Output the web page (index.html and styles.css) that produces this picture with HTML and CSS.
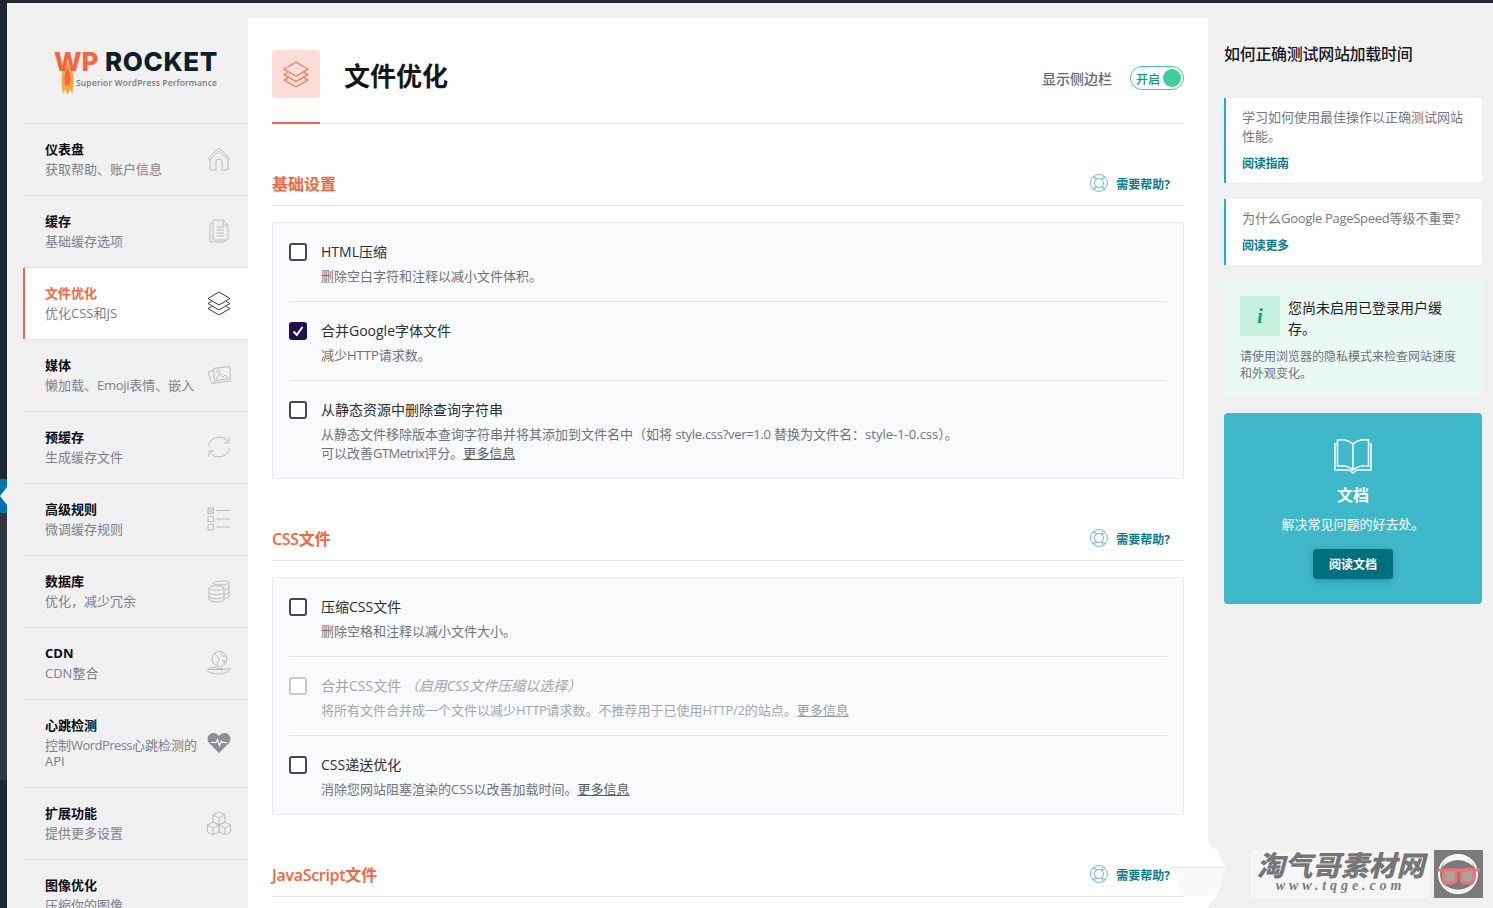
FILE: index.html
```html
<!DOCTYPE html>
<html lang="zh-CN">
<head>
<meta charset="utf-8">
<title>WP Rocket 文件优化</title>
<link rel="stylesheet" href="styles.css">
</head>
<body>
<div class="topbar"></div>
<div class="layout">
  <div class="rail">
    <div class="rail-a"></div>
    <div class="rail-arrow"><span class="notch"></span></div>
    <div class="rail-b"></div>
    <div class="rail-c"></div>
  </div>

  <nav class="sidebar">
    <div class="logo">
      <svg width="170" height="56" viewBox="0 0 170 56">
        <path d="M13 17 L18 25 L19.500 33 L18.500 49 L15.800 44 L13.500 50 L11.200 44 L8.500 49 L7.500 33 L9 25Z" fill="#f9a03f"/>
        <path d="M13.500 22 L16.500 31 L15.500 42 L13.500 38 L11.500 42 L10.500 31Z" fill="#f56640"/>
        <text x="0" y="25.500" class="logo-wp">WP</text>
        <text x="51" y="25.500" class="logo-rocket">ROCKET</text>
        <text x="22" y="40.500" class="logo-tag">Superior WordPress Performance</text>
      </svg>
    </div>
    <ul class="menu">
      <li class="item"><div class="item-text"><div class="item-title">仪表盘</div><div class="item-sub">获取帮助、账户信息</div></div>
        <svg class="nav-icon" viewBox="0 0 24 24"><path d="M12 1 L1 11.500 L2.500 13 L12 4 L21.500 13 L23 11.500Z M3 12.500V23H9V15a3 3 0 0 1 6 0V23H21V12.500"/></svg></li>
      <li class="item"><div class="item-text"><div class="item-title">缓存</div><div class="item-sub">基础缓存选项</div></div>
        <svg class="nav-icon" viewBox="0 0 24 24"><path d="M6 4H4a1 1 0 0 0-1 1V22a1 1 0 0 0 1 1H17a1 1 0 0 0 1-1V21M6 2a1 1 0 0 1 1-1H16L21 6V20a1 1 0 0 1-1 1H7a1 1 0 0 1-1-1ZM16 1V6H21M9.500 8H17M9.500 11H17M9.500 14H17M9.500 17H17"/></svg></li>
      <li class="item active"><div class="item-text"><div class="item-title">文件优化</div><div class="item-sub">优化CSS和JS</div></div>
        <svg class="nav-icon" viewBox="0 0 24 24"><path d="M12 1 L23 7.500 L12 14 L1 7.500Z M4.500 10.500 L1 12.500 L12 19 L23 12.500 L19.500 10.500 M4.500 15.500 L1 17.500 L12 24 L23 17.500 L19.500 15.500"/></svg></li>
      <li class="item"><div class="item-text"><div class="item-title">媒体</div><div class="item-sub">懒加载、<span class="tight">Emoji</span>表情、嵌入</div></div>
        <svg class="nav-icon" viewBox="0 0 24 24"><path d="M7 7 L1 9 L5 21 L9 19.600 M6.500 5.500 L23 3.500 L23 18 L7.500 20Z M9 16 L13 11 L16 14 L18 12 L21 15.500 M9 16 L9 17.500 L21 16M11.500 6.800a1.800 1.800 0 1 0 .1 0"/></svg></li>
      <li class="item"><div class="item-text"><div class="item-title">预缓存</div><div class="item-sub">生成缓存文件</div></div>
        <svg class="nav-icon" viewBox="0 0 24 24"><path d="M1.500 10.500A10.800 10.800 0 0 1 21 7M22.500 13.500A10.800 10.800 0 0 1 3 17M22 2.500V8H16.500M2 21.500V16H7.500"/></svg></li>
      <li class="item"><div class="item-text"><div class="item-title">高级规则</div><div class="item-sub">微调缓存规则</div></div>
        <svg class="nav-icon" viewBox="0 0 24 24"><path d="M1 1H6.500V6.500H1ZM1 1L6.500 6.500M6.500 1L1 6.500M1 9.300H6.500V14.800H1ZM1 17.500H6.500V23H1ZM9.500 3.500H23M9.500 12H23M9.500 20H23"/></svg></li>
      <li class="item"><div class="item-text"><div class="item-title">数据库</div><div class="item-sub">优化，减少冗余</div></div>
        <svg class="nav-icon" viewBox="0 0 24 24"><path d="M6 4.500C6 2.500 22 .5 22 3.500V17C22 18.500 19 19.500 17 19.800M6 4.500C6 6.500 22 6.500 22 3.500M22 8C22 10 19 11 17 11.300M22 12.500C22 14.500 19 15.500 17 15.800M2 9C2 6 17 6 17 9V20C17 24 2 24 2 20ZM2 9C2 12 17 12 17 9M2 13.500C2 16.500 17 16.500 17 13.500M2 17.500C2 20.500 17 20.500 17 17.500"/></svg></li>
      <li class="item"><div class="item-text"><div class="item-title">CDN</div><div class="item-sub">CDN整合</div></div>
        <svg class="nav-icon" viewBox="0 0 24 24"><circle cx="12.500" cy="8" r="7.500"/><path d="M8 2.500C9 6 12 5 12 8S9 11 11 15M15 1.500C13 4 16 6 17 5S19.500 6 19.500 7M15 10L18 9.500L16.500 13.500M1 18.500C4 15.500 8 16 11 17.500H15C17 18 16 20 14 19.500M15.500 18.500L23 17.500C24 18.500 22 20 20 21C14 24 8 23 3 21.500C1 21 0 19.500 1 18.500Z"/></svg></li>
      <li class="item two"><div class="item-text"><div class="item-title">心跳检测</div><div class="item-sub">控制<span class="tighter">WordPress</span>心跳检测的API</div></div>
        <svg class="nav-icon heart" viewBox="0 0 24 24"><path class="heart-fill" d="M12 22 L2.500 12.500C-1 9 .5 2.500 6 2C9 1.800 11 3.500 12 5C13 3.500 15 1.800 18 2C23.500 2.500 25 9 21.500 12.500Z"/><path class="heart-line" d="M4 11.500H9L10.500 8.500L12.500 14.500L14.500 10L15.500 11.500H20"/></svg></li>
      <li class="item"><div class="item-text"><div class="item-title">扩展功能</div><div class="item-sub">提供更多设置</div></div>
        <svg class="nav-icon" viewBox="0 0 24 24"><path d="M12 1 L18 4 V11 L12 14 L6 11 V4Z M6 4 L12 7 L18 4 M12 7V14M6 11 L12 14 V21 L6 24 L0.500 21 V14Z M0.500 14 L6 17 L12 14 M6 17V24M18 11 L23.500 14 V21 L18 24 L12 21 V14Z M12 14 L18 17 L23.500 14 M18 17V24"/></svg></li>
      <li class="item"><div class="item-text"><div class="item-title">图像优化</div><div class="item-sub">压缩你的图像</div></div></li>
    </ul>
  </nav>

  <main class="main">
    <header class="page-head">
      <div class="page-icon">
        <svg width="26" height="26" viewBox="0 0 24 24"><path d="M12 1 L23 7.500 L12 14 L1 7.500Z M4.500 10.500 L1 12.500 L12 19 L23 12.500 L19.500 10.500 M4.500 15.500 L1 17.500 L12 24 L23 17.500 L19.500 15.500"/></svg>
      </div>
      <h1 class="page-title">文件优化</h1>
      <div class="sidebar-toggle">
        <span class="toggle-label">显示侧边栏</span>
        <span class="toggle"><span class="toggle-text">开启</span><span class="knob"></span></span>
      </div>
    </header>

    <section class="section">
      <div class="section-head">
        <h2 class="section-title">基础设置</h2>
        <a class="help"><svg class="ring" viewBox="0 0 18 18"><circle cx="9" cy="9" r="8.500"/><circle cx="9" cy="9" r="4.500"/><path d="M3 3L5.800 5.800M15 3L12.200 5.800M3 15L5.800 12.200M15 15L12.200 12.200M4.600 2.200L6.600 5M13.400 2.200L11.400 5M4.600 15.800L6.600 13M13.400 15.800L11.400 13"/></svg>需要帮助?</a>
      </div>
      <div class="card">
        <div class="field">
          <span class="check"></span>
          <div class="field-body"><div class="field-label">HTML压缩</div><div class="field-desc">删除空白字符和注释以减小文件体积。</div></div>
        </div>
        <div class="field">
          <span class="check checked"><svg viewBox="0 0 18 18" width="18" height="18"><path d="M4.500 9.500L7.800 13L13.500 5"/></svg></span>
          <div class="field-body"><div class="field-label">合并Google字体文件</div><div class="field-desc">减少HTTP请求数。</div></div>
        </div>
        <div class="field">
          <span class="check"></span>
          <div class="field-body"><div class="field-label">从静态资源中删除查询字符串</div><div class="field-desc">从静态文件移除版本查询字符串并将其添加到文件名中（如将 <span class="tight">style.css?ver=1.0</span> 替换为文件名：style-1-0.css）。<br>可以改善<span class="tighter">GTMetrix</span>评分。<a class="more">更多信息</a></div></div>
        </div>
      </div>
    </section>

    <section class="section">
      <div class="section-head">
        <h2 class="section-title"><span class="tight">CSS</span>文件</h2>
        <a class="help"><svg class="ring" viewBox="0 0 18 18"><circle cx="9" cy="9" r="8.500"/><circle cx="9" cy="9" r="4.500"/><path d="M3 3L5.800 5.800M15 3L12.200 5.800M3 15L5.800 12.200M15 15L12.200 12.200M4.600 2.200L6.600 5M13.400 2.200L11.400 5M4.600 15.800L6.600 13M13.400 15.800L11.400 13"/></svg>需要帮助?</a>
      </div>
      <div class="card">
        <div class="field">
          <span class="check"></span>
          <div class="field-body"><div class="field-label">压缩CSS文件</div><div class="field-desc">删除空格和注释以减小文件大小。</div></div>
        </div>
        <div class="field disabled">
          <span class="check"></span>
          <div class="field-body"><div class="field-label">合并CSS文件 <em class="field-note">（启用CSS文件压缩以选择）</em></div><div class="field-desc">将所有文件合并成一个文件以减少<span class="tight">HTTP</span>请求数。不推荐用于已使用<span class="tight">HTTP/2</span>的站点。<a class="more">更多信息</a></div></div>
        </div>
        <div class="field">
          <span class="check"></span>
          <div class="field-body"><div class="field-label">CSS递送优化</div><div class="field-desc">消除您网站阻塞渲染的CSS以改善加载时间。<a class="more">更多信息</a></div></div>
        </div>
      </div>
    </section>

    <section class="section">
      <div class="section-head">
        <h2 class="section-title"><span class="tight">JavaScript</span>文件</h2>
        <a class="help"><svg class="ring" viewBox="0 0 18 18"><circle cx="9" cy="9" r="8.500"/><circle cx="9" cy="9" r="4.500"/><path d="M3 3L5.800 5.800M15 3L12.200 5.800M3 15L5.800 12.200M15 15L12.200 12.200M4.600 2.200L6.600 5M13.400 2.200L11.400 5M4.600 15.800L6.600 13M13.400 15.800L11.400 13"/></svg>需要帮助?</a>
      </div>
    </section>
  </main>

  <aside class="aside">
    <h3 class="aside-title">如何正确测试网站加载时间</h3>
    <div class="tip">
      <p class="tip-text">学习如何使用最佳操作以正确测试网站性能。</p>
      <a class="tip-link">阅读指南</a>
    </div>
    <div class="tip">
      <p class="tip-text">为什么<span class="tight">Google PageSpeed</span>等级不重要?</p>
      <a class="tip-link">阅读更多</a>
    </div>
    <div class="notice">
      <div class="notice-head">
        <span class="notice-icon">i</span>
        <p class="notice-title">您尚未启用已登录用户缓存。</p>
      </div>
      <p class="notice-text">请使用浏览器的隐私模式来检查网站速度和外观变化。</p>
    </div>
    <div class="docs">
      <svg class="book" width="38" height="36" viewBox="0 0 38 36"><path d="M19 6C15 2.500 8 1.500 3.500 2V28C9 27.500 15 28.500 19 32C23 28.500 29 27.500 34.500 28V2C30 1.500 23 2.500 19 6ZM19 6V32M3.500 6H1V32H15.500L19 35L22.500 32H37V6H34.500"/></svg>
      <div class="docs-title">文档</div>
      <div class="docs-sub">解决常见问题的好去处。</div>
      <a class="docs-btn">阅读文档</a>
    </div>
  </aside>
</div>

<svg class="smudge" width="60" height="70" viewBox="0 0 60 70">
  <path class="smudge-white" d="M30 0H38L40 8L48 12L50 20L56 29L52 42L47 58L38 68H30Z"/>
  <path class="smudge-soft" d="M2 30H56L52 42L44 58H14Z"/>
  <path class="smudge-line" d="M2 29.500H56"/>
</svg>
<div class="watermark">
  <div class="wm-text"><div class="wm-cn">淘气哥素材网</div><div class="wm-url">www.tqge.com</div></div>
  <div class="wm-badge">
    <svg width="49" height="48" viewBox="0 0 49 48">
      <circle class="wm-ring" cx="24" cy="24" r="19"/>
      <path class="wm-crescent" d="M8 17A17 17 0 0 1 40 17A22 22 0 0 0 8 17Z"/>
      <path class="wm-crescent" d="M9 33A17 17 0 0 0 39 33A20 20 0 0 1 9 33Z"/>
      <path class="wm-bar" d="M4 20H46"/>
      <rect class="wm-lens" x="9" y="20" width="13" height="13" rx="4"/>
      <rect class="wm-lens" x="27" y="20" width="13" height="13" rx="4"/>
    </svg>
  </div>
</div>
</body>
</html>
```
FILE: styles.css
```css
* { box-sizing: border-box; }
html, body { margin: 0; padding: 0; height: 908px; overflow: hidden; }
body {
  position: relative;
  background: #f0f0f0;
  color: #2a2f36;
  font-family: "Open Sans", "Noto Sans CJK SC", sans-serif;
  font-size: 13px;
}
h1, h2, h3, p, ul { margin: 0; padding: 0; }
ul { list-style: none; }
a { text-decoration: none; }
.tight { letter-spacing: -.3px; }
.tighter { letter-spacing: -.55px; }

.topbar { height: 3px; background: #23282d; }
.layout { display: flex; align-items: flex-start; height: 905px; }

/* WP admin rail */
.rail { width: 7px; height: 905px; flex: none; display: flex; flex-direction: column; }
.rail-a { height: 476px; background: #23282d; }
.rail-arrow { height: 34px; background: #0073aa; display: flex; align-items: center; justify-content: flex-end; }
.notch { width: 0; height: 0; border-style: solid; border-width: 9px 7px 9px 0; border-color: transparent #f0f0f0 transparent transparent; }
.rail-b { height: 267px; background: #32373c; }
.rail-c { flex: 1; background: #23282d; }

/* Left menu */
.sidebar { width: 241px; flex: none; padding-left: 16px; }
.logo { height: 120px; padding: 42px 0 0 31px; }
.logo svg { display: block; }
.logo-wp { font: 800 26px Inter, sans-serif; fill: #f56640; }
.logo-rocket { font: 800 26px Inter, sans-serif; letter-spacing: .6px; fill: #0f1e2b; }
.logo-tag { font: 600 8.500px "Open Sans", sans-serif; letter-spacing: .13px; fill: #777b80; }
.menu { border-top: 1px solid #e0e1e3; }
.item {
  display: flex;
  justify-content: space-between;
  align-items: center;
  padding: 17px 17px 18px 22px;
  border-bottom: 1px solid #e0e1e3;
  min-height: 72px;
}
.item.active { background: #fff; box-shadow: inset 2px 0 0 #f56640; }
.item-text { width: 160px; }
.item-title { font-size: 13px; line-height: 16px; font-weight: 700; color: #0a0c10; margin-bottom: 4px; }
.item-sub { font-size: 13px; line-height: 16px; color: #7c8088; }
.active .item-title { color: #f56640; }
.nav-icon { width: 24px; height: 24px; flex: none; fill: none; stroke: #b9bcc0; stroke-width: 1; }
.active .nav-icon { stroke: #2f3a46; }
.nav-icon.heart { stroke: none; }
.heart-fill { fill: #8e8f92; stroke: none; }
.heart-line { fill: none; stroke: #fff; stroke-width: 1.200; }

/* Main */
.main { width: 960px; flex: none; margin-top: 15px; height: 890px; background: #fff; padding: 32px 24px 0; }
.page-head { position: relative; display: flex; align-items: center; height: 74px; padding-bottom: 25px; margin-bottom: 48px; border-bottom: 1px solid #e3e4e6; }
.page-head::after { content: ""; position: absolute; left: 0; bottom: -1px; width: 48px; height: 2px; background: #f56640; }
.page-icon { width: 48px; height: 48px; border-radius: 3px; background: #ffded8; display: flex; align-items: center; justify-content: center; }
.page-icon svg { fill: none; stroke: #f7694a; stroke-width: 1; }
.page-title { margin-left: 24px; margin-top: 4px; font-size: 26px; line-height: 34px; font-weight: 700; color: #14161b; }
.sidebar-toggle { margin-left: auto; margin-top: 8px; display: flex; align-items: center; gap: 18px; }
.toggle-label { font-size: 14px; color: #666a70; font-weight: 500; }
.toggle { width: 54px; height: 24px; border: 1px solid #3fcf9b; border-radius: 12px; display: flex; align-items: center; justify-content: space-between; padding: 0 2px 0 5px; }
.toggle-text { padding-top: 1px; font-size: 12px; font-weight: 500; color: #0c9a6b; }
.knob { width: 18px; height: 18px; border-radius: 50%; background: #3fcf9b; }

.section { margin-bottom: 48px; }
.section-head { box-sizing: content-box; display: flex; justify-content: space-between; align-items: center; height: 24px; padding: 0 14px 9px 0; border-bottom: 1px solid #e3e4e6; }
.section-title { font-size: 16px; line-height: 24px; font-weight: 600; color: #f56640; }
.help { display: flex; align-items: center; gap: 8px; font-size: 12px; font-weight: 700; color: #0b7a8c; }
.ring { width: 18px; height: 18px; margin-top: -2px; fill: none; stroke: #73bcd2; stroke-width: 1; }
.card { margin-top: 16px; background: #f9fafb; border: 1px solid #e7e9ed; border-radius: 3px; padding: 0 16px; }
.field { display: flex; gap: 14px; padding: 19px 0 15px; border-bottom: 1px solid #e3e4e6; }
.field:last-child { border-bottom: 0; }
.check { flex: none; width: 18px; height: 18px; margin-top: 1px; border: 2px solid #44484e; border-radius: 3px; background: #fff; position: relative; }
.check.checked { background: #1e0f4f; border-color: #1e0f4f; }
.check svg { position: absolute; left: -2px; top: -2px; fill: none; stroke: #fff; stroke-width: 2; }
.field-label { font-size: 14px; line-height: 20px; color: #2a2f36; margin-bottom: 5px; }
.field-desc { font-size: 13px; line-height: 19px; color: #6e737a; }
.more { color: #555a60; text-decoration: underline; }
.disabled .check { border-color: #c6c8cb; }
.disabled .field-label, .disabled .field-desc { color: #a2a6ab; }
.disabled .more { color: #9a9ea3; }
.field-note { font-style: italic; font-size: 14px; line-height: 1; }

/* Right column */
.aside { width: 258px; flex: none; margin-left: 16px; padding-top: 39px; }
.aside-title { font-size: 16px; line-height: 24px; font-weight: 500; letter-spacing: -.3px; color: #16181d; margin-bottom: 32px; }
.tip { background: #fff; border-left: 2px solid #1fb1c6; border-radius: 0 3px 3px 0; padding: 10px 16px 10px; margin-bottom: 16px; box-shadow: 0 0 1px #d8dadd; }
.tip-text { font-size: 13px; line-height: 19px; color: #75797f; margin-bottom: 9px; }
.tip-link { display: block; font-size: 12px; line-height: 18px; font-weight: 700; color: #0b7a8c; letter-spacing: -.3px; }
.notice { background: #e9f8f3; border-radius: 3px; padding: 15px 16px 15px; margin-bottom: 16px; }
.notice-head { display: flex; gap: 8px; }
.notice-icon { flex: none; width: 40px; height: 40px; border-radius: 3px; background: #c5f0dd; color: #0e9e74; display: flex; align-items: center; justify-content: center; font: italic 700 20px "Liberation Serif", serif; }
.notice-title { padding-top: 1px; font-size: 14px; line-height: 21px; color: #1b1e24; }
.notice-text { margin-top: 9px; font-size: 12px; line-height: 17px; color: #6e737a; }
.docs { background: #3fb8ca; border-radius: 4px; padding: 25px 0 0; height: 191px; display: flex; flex-direction: column; align-items: center; color: #fff; }
.book { fill: none; stroke: #fff; stroke-width: 1.500; flex: none; }
.docs-title { margin-top: 9px; font-size: 16px; line-height: 24px; font-weight: 700; }
.docs-sub { margin-top: 7px; font-size: 13px; line-height: 20px; }
.docs-btn { margin-top: 15px; width: 80px; height: 30px; background: #00707f; border-radius: 4px; display: flex; align-items: center; justify-content: center; font-size: 12px; font-weight: 700; color: #fff; box-shadow: 0 2px 6px rgba(0, 60, 70, .3); }

/* Watermark artefacts lying over the page */
.smudge { position: absolute; left: 1170px; top: 838px; }
.smudge-white { fill: #fff; }
.smudge-soft { fill: #f8f9fb; }
.smudge-line { fill: none; stroke: #e6e8ec; stroke-width: 1; }
.watermark { position: absolute; left: 1251px; top: 850px; display: flex; gap: 4px; height: 48px; }
.wm-text { width: 179px; background: #f5f5f5; text-align: center; padding-top: 1px; }
.wm-cn { font-size: 28px; line-height: 28px; font-weight: 900; font-style: italic; color: #767676; white-space: nowrap; }
.wm-url { font: italic 700 14px/14px "Liberation Serif", serif; letter-spacing: 3.900px; color: #7a7a7a; }
.wm-badge { width: 49px; height: 48px; background: #7a7a7a; }
.wm-badge svg { display: block; }
.wm-ring { fill: none; stroke: #fff; stroke-width: 2; }
.wm-crescent { fill: #fff; }
.wm-bar { fill: none; stroke: #ee7573; stroke-width: 3; }
.wm-lens { fill: #a5a5a5; stroke: #ee7573; stroke-width: 3; }
```
